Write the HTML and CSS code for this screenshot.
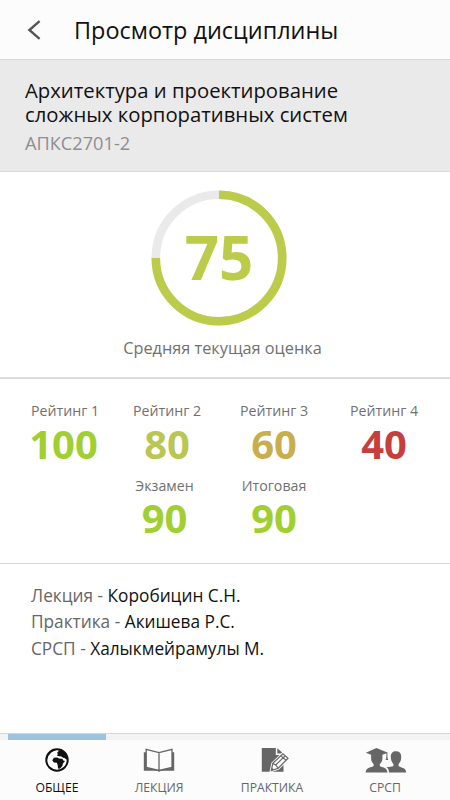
FILE: index.html
```html
<!DOCTYPE html>
<html lang="ru">
<head>
  <meta charset="UTF-8" />
  <meta name="viewport" content="width=device-width, initial-scale=1" />
  <title>Просмотр дисциплины</title>
  <link rel="stylesheet" href="styles.css">
</head>
<body>
  <header class="topbar">
    <svg class="back" viewBox="0 0 14 20"><path d="M12.6 1.2 L2.4 10 L12.6 18.8" /></svg>
    <h1>Просмотр дисциплины</h1>
  </header>

  <section class="course">
    <h2>Архитектура и проектирование<br>сложных корпоративных систем</h2>
    <p class="code">АПКС2701-2</p>
  </section>

  <section class="average">
    <div class="gauge">
      <svg viewBox="0 0 136 136">
        <circle class="track" cx="68" cy="68" r="63.2" />
        <circle class="value" cx="68" cy="68" r="63.2" pathLength="100" stroke-dasharray="75 25" transform="rotate(-90 68 68)" />
      </svg>
      <span>75</span>
    </div>
    <p>Средняя текущая оценка</p>
  </section>

  <section class="ratings">
    <div class="rating"><span>Рейтинг 1</span><b class="high hundred">100</b></div>
    <div class="rating"><span>Рейтинг 2</span><b class="good">80</b></div>
    <div class="rating"><span>Рейтинг 3</span><b class="medium">60</b></div>
    <div class="rating"><span>Рейтинг 4</span><b class="low">40</b></div>
    <div class="rating exam"><span>Экзамен</span><b class="high">90</b></div>
    <div class="rating final"><span>Итоговая</span><b class="high">90</b></div>
  </section>

  <section class="teachers">
    <p>Лекция - <span>Коробицин С.Н.</span></p>
    <p>Практика - <span>Акишева Р.С.</span></p>
    <p>СРСП - <span>Халыкмейрамулы М.</span></p>
  </section>

  <nav class="tabs">
    <a class="tab active">
      <svg width="24" height="24" viewBox="0 0 24 24">
        <circle cx="12" cy="12" r="10.7" fill="#fff" stroke="#111" stroke-width="2" />
        <path fill="#111" d="M11.5 1.2 L9 3 L6.5 4 L5 6 L3 8 L1.5 10 L2 7 L5 3.5 L9 1.4Z" />
        <path fill="#111" d="M14 2.6 L17 1.8 L21 5 L23 10.5 L21.4 11.4 L19.5 10 L18 9.8 L16.4 8.4 L14 8.3 L11.8 7.4 L13 6 L12 5Z" />
        <path fill="#111" d="M8.8 9.8 L12.2 9.4 L14 10.4 L17.3 10.8 L18.3 12.4 L20 13 L17.8 15.8 L17.4 18 L14.8 20.8 L13 20.4 L12.7 17 L11.8 14.8 L8.8 14.5 L7.3 12.3Z" />
      </svg>
      <span>ОБЩЕЕ</span>
    </a>
    <a class="tab">
      <svg width="32" height="24" viewBox="0 0 32 24">
        <path fill="#666" d="M.8 4.3 H4 V20 L16 22.2 L28 20 V4.3 H31.2 V22.8 H18 L16 23.8 L14 22.8 H.8Z" />
        <path fill="#fcfcfc" stroke="#666" stroke-width="1.3" d="M3.2 1.3 L16 4.6 L29 1.3 V19.4 L16 22.5 L3.2 19.4Z M16 4.6 V22.5" />
      </svg>
      <span>ЛЕКЦИЯ</span>
    </a>
    <a class="tab">
      <svg class="note" width="28" height="26" viewBox="0 0 28 26">
        <path fill="#666" d="M.8 1 H14.8 V8 H22.5 V24.8 H.8Z M16.3 1.3 L22.2 6.5 H16.3Z" />
        <path fill="#666" stroke="#fcfcfc" stroke-width="3" d="M10.3 23.6 L11.8 16.4 L21.9 6.8 L27 11.2 L17.2 21.2Z" />
        <path fill="#fcfcfc" stroke="#666" stroke-width="1.2" d="M10.3 23.6 L11.8 16.4 L21.9 6.8 L27 11.2 L17.2 21.2Z" />
        <path fill="none" stroke="#666" stroke-width="1.1" d="M11.8 16.4 L14.7 18 L17.2 21.2 M14.7 18 L24 9 M20 8.8 L24.8 13.2" />
        <path fill="#666" d="M10.3 23.6 L10.8 20.8 L13 22.5Z" />
      </svg>
      <span>ПРАКТИКА</span>
    </a>
    <a class="tab">
      <svg class="people" width="42" height="25" viewBox="0 0 42 25">
        <path fill="#666" d="M11.5 0 L23 4.7 L17.4 6.7 V10.5 C17.4 13 16.5 14.2 14.8 16 V18 C16.5 19.6 22.4 19.2 22.4 24.5 H.7 C.7 19.2 7 19.6 8.6 18 V16 C7 14.2 6.1 13 6.1 10.5 V6.7 L.8 4.7Z" />
        <path fill="none" stroke="#666" d="M21.9 5 V10" />
        <path fill="#666" d="M21.9 8.7 L23.3 12 H20.5Z" />
        <path fill="#666" d="M31 3.3 C34.4 3.3 36.4 5.2 36.2 9 C36.2 12 35.4 14.3 33.6 16 V18 C35 19.7 41.2 19.2 41.2 24.5 H24 C24 21.5 22.8 20 21.5 19.3 C24.3 18.6 27.2 18.8 28.4 18 V16 C26.7 14.3 25.9 12 25.8 9 C25.8 5.2 27.7 3.3 31 3.3Z" />
      </svg>
      <span>СРСП</span>
    </a>
  </nav>
</body>
</html>
```

FILE: styles.css
```css
* {
  box-sizing: border-box;
  margin: 0;
  padding: 0;
}

body {
  font-family: "Open Sans", "Noto Sans", sans-serif;
  background: #fff;
  color: #111;
  height: 800px;
  display: flex;
  flex-direction: column;
  overflow: hidden;
}

.topbar {
  display: flex;
  align-items: center;
  height: 60px;
  padding-left: 27px;
  background: #fcfcfc;
  border-bottom: 1px solid #d6d6d6;
}

.back {
  width: 14px;
  height: 20px;
  margin-right: 33px;
  fill: none;
  stroke: #555;
  stroke-width: 2.4;
}

h1 {
  font-size: 23.45px;
  font-weight: 400;
  line-height: 34px;
}

.course {
  height: 112px;
  padding: 18px 25px 0;
  background: #eaeaea;
  border-bottom: 1px solid #dadada;
}

h2 {
  font-size: 20.3px;
  font-weight: 400;
  line-height: 24px;
}

.code {
  margin-top: 5px;
  font-size: 18.2px;
  line-height: 24px;
  color: #8e8e8e;
}

.average {
  display: flex;
  flex-direction: column;
  align-items: center;
  height: 207px;
  padding: 18px 12px 0 0;
  border-bottom: 2px solid #dcdcdc;
}

.gauge {
  display: grid;
  place-items: center;
  width: 136px;
  height: 136px;
}

.gauge svg,
.gauge span {
  grid-area: 1 / 1;
}

.gauge circle {
  fill: none;
  stroke-width: 8.6;
}

.gauge .track {
  stroke: #eaeaea;
}

.gauge .value {
  stroke: #bdcb4b;
}

.gauge span {
  padding-bottom: 2px;
  font-size: 60px;
  font-weight: 700;
  line-height: 70px;
  color: #bdcb4b;
}

.average p {
  margin-top: 10px;
  padding-left: 7px;
  font-size: 16.3px;
  line-height: 24px;
  color: #707070;
}

.ratings {
  display: grid;
  grid-template-columns: 102px 102px 112px 108px;
  grid-auto-rows: 75px;
  height: 185px;
  padding: 22px 0 0 14px;
  border-bottom: 1px solid #d6d6d6;
}

.rating {
  display: flex;
  flex-direction: column;
  align-items: center;
}

.rating span {
  font-size: 14.2px;
  line-height: 20px;
  color: #707070;
}

.rating b {
  font-size: 40px;
  line-height: 46px;
}

.exam {
  grid-column: 2;
  padding-right: 5px;
}

.exam b,
.final b {
  line-height: 44px;
}

.hundred {
  padding-right: 3px;
}

.high {
  color: #a1cf32;
}

.good {
  color: #bac653;
}

.medium {
  color: #c9ae4d;
}

.low {
  color: #c63e3e;
}

.teachers {
  flex: 1;
  padding: 19px 31px;
  font-size: 17.25px;
  line-height: 26.4px;
  color: #666;
}

.teachers span {
  color: #111;
}

.tabs {
  display: grid;
  grid-template-columns: 98px 106px 120px 106px;
  height: 67px;
  padding-left: 8px;
  background: linear-gradient(#f3f3f3 6px, #fcfcfc 6px);
  border-top: 1px solid #d6d6d6;
}

.tab {
  display: flex;
  flex-direction: column;
  align-items: center;
  justify-content: space-between;
  padding: 8px 0 2px;
  border-top: 6px solid transparent;
  font-size: 12.2px;
  line-height: 20px;
  color: #666;
}

.note {
  margin: -1px 0 0 5px;
}

.people {
  margin-left: 2px;
}

.active {
  border-color: #9dc3e0;
  color: #111;
}
```
